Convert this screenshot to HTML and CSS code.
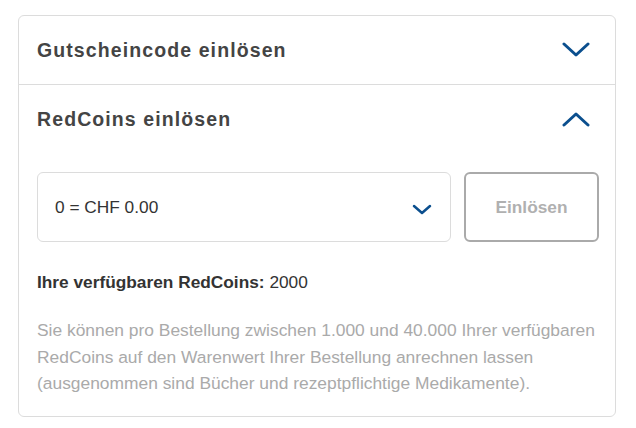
FILE: index.html
```html
<!DOCTYPE html>
<html lang="de">
<head>
    <meta charset="UTF-8">
    <meta name="viewport" content="width=device-width, initial-scale=1.0">
    <title>Einlösen</title>
    <link rel="stylesheet" href="styles.css">
</head>
<body>
    <!-- Akkordeon mit zwei Abschnitten -->
    <div class="accordion">
        <!-- Gutscheincode (zugeklappt) -->
        <div class="acc-header acc-header-closed">
            <span class="acc-title">Gutscheincode einlösen</span>
            <svg class="chevron" width="28" height="16" viewBox="0 0 28 16">
                <polyline points="2,2 14,13 26,2" />
            </svg>
        </div>

        <!-- RedCoins (aufgeklappt) -->
        <div class="acc-header">
            <span class="acc-title">RedCoins einlösen</span>
            <svg class="chevron" width="28" height="16" viewBox="0 0 28 16">
                <polyline points="2,14 14,3 26,14" />
            </svg>
        </div>
        <div class="acc-body">
            <div class="redeem-row">
                <div class="select-box">
                    <span class="select-value">0 = CHF 0.00</span>
                    <svg class="select-chevron" width="20" height="11" viewBox="0 0 20 11">
                        <polyline points="2,2 10,9 18,2" />
                    </svg>
                </div>
                <button class="redeem-button" disabled>Einlösen</button>
            </div>
            <div class="available"><strong>Ihre verfügbaren RedCoins:</strong> 2000</div>
            <p class="hint">Sie können pro Bestellung zwischen 1.000 und 40.000 Ihrer verfügbaren RedCoins auf den Warenwert Ihrer Bestellung anrechnen lassen (ausgenommen sind Bücher und rezeptpflichtige Medikamente).</p>
        </div>
    </div>
</body>
</html>
```

FILE: styles.css
```css
body {
    margin: 0;
    font-family: "Liberation Sans", Arial, sans-serif;
    background-color: #fff;
    color: #333;
}

/* Rahmen um das ganze Akkordeon */
.accordion {
    width: 598px;
    box-sizing: border-box;
    margin: 15px 0 0 18px;
    border: 1px solid #dcdcdc;
    border-radius: 6px;
}

.acc-header {
    height: 68px;
    display: flex;
    align-items: center;
    justify-content: space-between;
    padding: 0 25px 0 18px;
}

.acc-header-closed {
    border-bottom: 1px solid #dcdcdc;
}

.acc-title {
    font-size: 19.5px;
    font-weight: bold;
    letter-spacing: 1.1px;
    color: #444;
}

.chevron polyline,
.select-chevron polyline {
    fill: none;
    stroke: #0b4f8e;
    stroke-width: 3;
    stroke-linecap: round;
    stroke-linejoin: round;
}

.select-chevron polyline {
    stroke-width: 2.5;
}

.acc-body {
    padding: 19px 16px 19px 18px;
}

/* Auswahl + Button nebeneinander */
.redeem-row {
    display: flex;
    gap: 13px;
}

.select-box {
    flex: 1;
    height: 70px;
    box-sizing: border-box;
    border: 1px solid #dcdcdc;
    border-radius: 6px;
    display: flex;
    align-items: center;
    justify-content: space-between;
    padding: 0 18px 0 17px;
}

.select-value {
    font-size: 17.3px;
    color: #333;
}

.select-chevron {
    margin-top: 5px;
}

.redeem-button {
    width: 135px;
    height: 70px;
    box-sizing: border-box;
    border: 2px solid #aaa;
    border-radius: 6px;
    background-color: #fff;
    font-family: inherit;
    font-size: 17.3px;
    font-weight: bold;
    color: #b0b0b0;
}

.available {
    margin-top: 27px;
    font-size: 17.3px;
    line-height: 26px;
    color: #333;
}

.hint {
    margin: 22px 0 0;
    font-size: 17.4px;
    line-height: 26.5px;
    color: #aaa;
}
```
